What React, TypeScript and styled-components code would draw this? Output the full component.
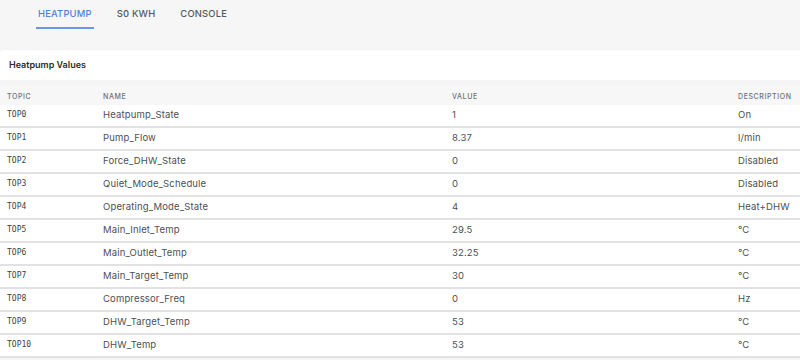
import styled, { createGlobalStyle } from 'styled-components';

const GlobalStyle = createGlobalStyle`
  html, body {
    margin: 0;
    padding: 0;
    background: #f6f6f7;
    font-family: Inter, "Noto Sans", sans-serif;
  }
`;

const Page = styled.div`
  width: 800px;
  height: 360px;
  overflow: hidden;
`;

const Tabs = styled.nav`
  display: flex;
  padding-left: 36px;
  height: 50px;
  align-items: flex-start;
`;

const Tab = styled.div<{ $active?: boolean }>`
  padding: 8px 2px 7px;
  margin-right: 21px;
  font-size: 9.4px;
  font-weight: 500;
  letter-spacing: 0.2px;
  line-height: 12px;
  color: ${(p) => (p.$active ? '#4d80d9' : '#56585d')};
  border-bottom: 2px solid ${(p) => (p.$active ? '#6b97e4' : 'transparent')};
`;

const Card = styled.section`
  background: #fff;
  border-radius: 3px 0 0 0;
  box-shadow: 0 0 2px rgba(0, 0, 0, 0.05);
`;

const CardTitle = styled.h2`
  margin: 0;
  padding: 0 9px 1px;
  height: 35px;
  box-sizing: border-box;
  display: flex;
  align-items: center;
  font-size: 9px;
  font-weight: 600;
  color: #2c2c2c;
  border-bottom: 5px solid #f4f4f5;
`;

const Row = styled.div<{ $head?: boolean }>`
  display: grid;
  grid-template-columns: 96px 349px 286px 1fr;
  padding-left: 7px;
  align-items: center;
  box-sizing: border-box;
  height: ${(p) => (p.$head ? '20px' : '23px')};
  padding-top: ${(p) => (p.$head ? '2px' : '0')};
  padding-bottom: ${(p) => (p.$head ? '0' : '3px')};
  background: ${(p) => (p.$head ? '#f7f7f8' : '#fff')};
  border-bottom: ${(p) => (p.$head ? 'none' : '2px solid #e2e2e4')};
  font-size: ${(p) => (p.$head ? '7px' : '9.5px')};
  letter-spacing: ${(p) => (p.$head ? '0.6px' : '0.15px')};
  font-weight: ${(p) => (p.$head ? 500 : 400)};
  color: ${(p) => (p.$head ? '#6d6f74' : '#4c4f55')};
`;

const Topic = styled.span`
  font-family: "DejaVu Sans Mono", "Liberation Mono", monospace;
  font-size: 8px;
  letter-spacing: 0;
  color: #3d3f44;
`;

const rows = [
  ['TOP0', 'Heatpump_State', '1', 'On'],
  ['TOP1', 'Pump_Flow', '8.37', 'l/min'],
  ['TOP2', 'Force_DHW_State', '0', 'Disabled'],
  ['TOP3', 'Quiet_Mode_Schedule', '0', 'Disabled'],
  ['TOP4', 'Operating_Mode_State', '4', 'Heat+DHW'],
  ['TOP5', 'Main_Inlet_Temp', '29.5', '°C'],
  ['TOP6', 'Main_Outlet_Temp', '32.25', '°C'],
  ['TOP7', 'Main_Target_Temp', '30', '°C'],
  ['TOP8', 'Compressor_Freq', '0', 'Hz'],
  ['TOP9', 'DHW_Target_Temp', '53', '°C'],
  ['TOP10', 'DHW_Temp', '53', '°C'],
];

export default function App() {
  return (
    <>
      <GlobalStyle />
      <Page>
        <Tabs>
          <Tab $active>HEATPUMP</Tab>
          <Tab>S0 KWH</Tab>
          <Tab>CONSOLE</Tab>
        </Tabs>
        <Card>
          <CardTitle>Heatpump Values</CardTitle>
          <Row $head>
            <span>TOPIC</span>
            <span>NAME</span>
            <span>VALUE</span>
            <span>DESCRIPTION</span>
          </Row>
          {rows.map(([topic, name, value, desc]) => (
            <Row key={topic}>
              <Topic>{topic}</Topic>
              <span>{name}</span>
              <span>{value}</span>
              <span>{desc}</span>
            </Row>
          ))}
        </Card>
      </Page>
    </>
  );
}
